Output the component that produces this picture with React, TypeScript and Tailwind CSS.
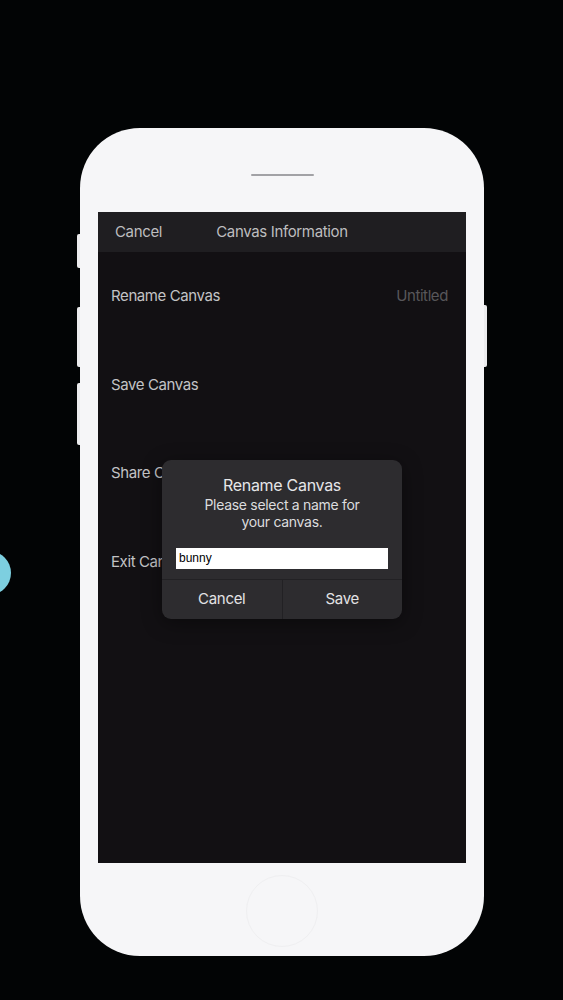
const font = "font-['Inter','Liberation_Sans',sans-serif]";

function ScreenRow({ label, value }: { label: string; value?: string }) {
  return (
    <div className="flex h-[88.5px] items-center justify-between pl-[13px] pr-[18px]">
      <span className="text-[15px] tracking-[-0.4px] text-[#c3c3c5]">{label}</span>
      {value && <span className="text-[15px] tracking-[-0.4px] text-[#58575a]">{value}</span>}
    </div>
  );
}

function RenameDialog() {
  return (
    <div className="absolute left-[64px] top-[248px] flex w-[240px] flex-col overflow-hidden rounded-[9px] bg-[#2d2c2f] shadow-[0_4px_20px_rgba(0,0,0,0.4)]">
      <div className="flex flex-col items-center pt-[15px] text-center tracking-[-0.3px]">
        <div className="text-[16px] leading-[20px] text-[#e6e6e8]">Rename Canvas</div>
        <div className="mt-[1px] text-[14px] leading-[17px] text-[#dcdcde]">
          Please select a name for
          <br />
          your canvas.
        </div>
      </div>
      <div className="mx-[14px] mt-[18px] h-[21px] bg-white px-[3px] text-[12px] leading-[21px] text-black font-['Liberation_Sans',sans-serif]">
        bunny
      </div>
      <div className="mt-[10px] flex h-[40px] border-t border-[#222124] tracking-[-0.3px]">
        <div className="flex flex-1 items-center justify-center border-r border-[#222124] text-[15px] text-[#e2e2e4]">
          Cancel
        </div>
        <div className="flex flex-1 items-center justify-center text-[15px] text-[#e2e2e4]">Save</div>
      </div>
    </div>
  );
}

export default function App() {
  return (
    <div className={`relative h-[1000px] w-[563px] overflow-hidden bg-[#020405] pl-[80px] pt-[128px] ${font}`}>
      {/* cut-off blue dot at the left edge */}
      <div className="absolute left-[-33px] top-[551px] h-[44px] w-[44px] rounded-full bg-[#7dcfe0]" />

      <div className="relative flex h-[828px] w-[404px] flex-col items-center rounded-[60px] bg-[#f6f6f8]">
        {/* side buttons */}
        <div className="absolute left-[-3px] top-[106px] h-[34px] w-[3px] rounded-l-[2px] bg-[#ececee]" />
        <div className="absolute left-[-3px] top-[179px] h-[60px] w-[3px] rounded-l-[2px] bg-[#ececee]" />
        <div className="absolute left-[-3px] top-[255px] h-[62px] w-[3px] rounded-l-[2px] bg-[#ececee]" />
        <div className="absolute right-[-3px] top-[177px] h-[62px] w-[3px] rounded-r-[2px] bg-[#ececee]" />

        {/* speaker */}
        <div className="mt-[46px] h-[2px] w-[63px] rounded-full bg-[#a2a2a6]" />

        {/* screen */}
        <div className="relative mt-[36px] flex h-[651px] w-[368px] flex-col bg-[#121013]">
          <div className="relative flex h-[40px] items-center bg-[#1f1e21] pl-[17px] tracking-[-0.35px]">
            <span className="text-[15px] text-[#bdbdbf]">Cancel</span>
            <span className="absolute inset-x-0 text-center text-[15px] text-[#bdbdbf]">Canvas Information</span>
          </div>
          <ScreenRow label="Rename Canvas" value="Untitled" />
          <ScreenRow label="Save Canvas" />
          <ScreenRow label="Share Canvas" />
          <ScreenRow label="Exit Canvas" />
          <RenameDialog />
        </div>

        {/* home button */}
        <div className="mt-[12px] h-[72px] w-[72px] rounded-full border border-[#efeff1]" />
      </div>
    </div>
  );
}
